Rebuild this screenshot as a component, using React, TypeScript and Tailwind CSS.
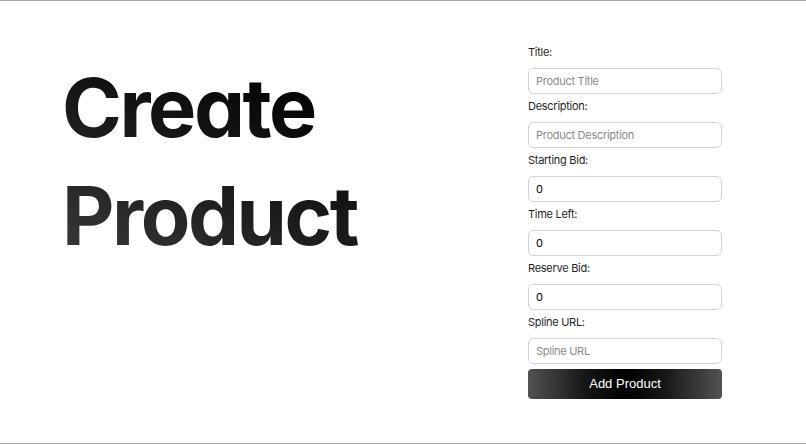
import { useState } from "react";

const fields = [
  { label: "Title:", placeholder: "Product Title", type: "text" },
  { label: "Description:", placeholder: "Product Description", type: "text" },
  { label: "Starting Bid:", value: "0", type: "number" },
  { label: "Time Left:", value: "0", type: "number" },
  { label: "Reserve Bid:", value: "0", type: "number" },
  { label: "Spline URL:", placeholder: "Spline URL", type: "text" },
];

export default function App() {
  const [values, setValues] = useState<Record<string, string>>(
    Object.fromEntries(fields.map((f) => [f.label, f.value ?? ""]))
  );

  return (
    <div className="h-[444px] w-full bg-white border-y border-[#a9a9a9] font-['Inter',sans-serif]">
      <div className="flex items-start pl-[62px]">
        {/* Heading */}
        <h1 className="mt-[53px] w-[466px] text-[81px] leading-[108px] font-bold tracking-[-0.03em] [font-feature-settings:'cv11'] bg-gradient-to-tr from-[#3c3c3e] via-[#111] to-black bg-clip-text text-transparent">
          Create
          <br />
          Product
        </h1>

        {/* Form */}
        <form
          className="mt-[43px] w-[194px] flex flex-col"
          onSubmit={(e) => e.preventDefault()}
        >
          {fields.map((f) => (
            <div key={f.label} className="flex flex-col">
              <label className="text-[11px] leading-4 tracking-tight text-[#1f1f1f]">
                {f.label}
              </label>
              <input
                type="text"
                placeholder={f.placeholder}
                value={values[f.label]}
                onChange={(e) =>
                  setValues({ ...values, [f.label]: e.target.value })
                }
                className="mt-2 mb-1 h-[26px] rounded-[5px] border border-[#d4d4d4] px-[7px] text-[11px] tracking-tight text-black placeholder:text-[#8a8a8a] outline-none"
              />
            </div>
          ))}
          <button
            type="submit"
            className="mt-[1px] h-[30px] rounded-[4px] bg-[linear-gradient(90deg,#525256_0%,#161616_30%,#000_50%,#161616_70%,#525256_100%)] text-white text-[13px] font-['Liberation_Sans',sans-serif]"
          >
            Add Product
          </button>
        </form>
      </div>
    </div>
  );
}
